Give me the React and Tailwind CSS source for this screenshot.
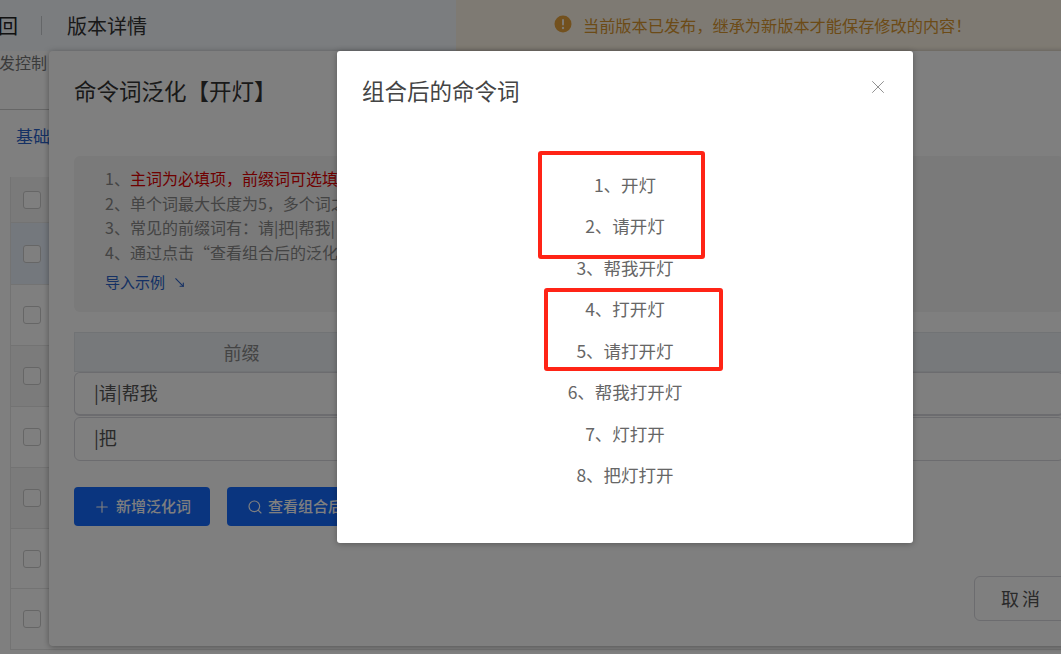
import { MoveDownRight, Plus, Search, X } from 'lucide-react';

const fontStack = 'font-["Noto_Sans_CJK_SC","Noto_Sans",sans-serif]';

const tableRows = [
  { height: 'h-[46px]', bg: 'bg-[#f4f4f4]' },
  { height: 'h-[62px]', bg: 'bg-[#e8f0fb]' },
  { height: 'h-[61px]', bg: 'bg-white' },
  { height: 'h-[61px]', bg: 'bg-[#f7f7f7]' },
  { height: 'h-[61px]', bg: 'bg-white' },
  { height: 'h-[61px]', bg: 'bg-[#f7f7f7]' },
  { height: 'h-[60px]', bg: 'bg-white' },
  { height: 'h-[61px]', bg: 'bg-white' },
];

const commands = ['1、开灯', '2、请开灯', '3、帮我开灯', '4、打开灯', '5、请打开灯', '6、帮我打开灯', '7、灯打开', '8、把灯打开'];

function PageBehind() {
  return (
    <div className="flex flex-col h-full">
      {/* header bar */}
      <div className="flex h-[51px] shrink-0 bg-[#f6fafe]">
        <div className="flex items-center w-[456px] shrink-0">
          <span className="w-[18px] overflow-hidden text-[20px] text-[#222] flex justify-end">回</span>
          <span className="ml-[23px] w-px h-[19px] bg-[#c8ccd0]"></span>
          <span className="ml-[25px] text-[20px] text-[#333]">版本详情</span>
        </div>
        <div className="flex-1 flex items-center pl-[98px] gap-[11px] bg-[#fdf5e6]">
          <svg width="18" height="18" viewBox="0 0 18 18" className="shrink-0 -mt-[3px]">
            <circle cx="9" cy="9" r="8.5" fill="#e6a23c" />
            <rect x="8" y="4" width="2" height="6.5" rx="1" fill="#fdf5e6" />
            <circle cx="9" cy="13" r="1.2" fill="#fdf5e6" />
          </svg>
          <span className="text-[16.2px] text-[#d9962f] whitespace-nowrap">当前版本已发布，继承为新版本才能保存修改的内容！</span>
        </div>
      </div>

      {/* tabs */}
      <div className="h-[59px] shrink-0 border-b border-[#ccc] bg-white">
        <div className="-ml-[17px] text-[16px] leading-[22px] text-[#777]">开发控制</div>
      </div>
      <div className="h-[67px] shrink-0 pl-[16px] pt-[12px] bg-white text-[17px] leading-[28px] text-[#2a62c8]">基础信息</div>

      {/* table */}
      <div className="flex-1 pl-[10px] bg-white">
        <div className="border-l border-[#e6e6e6]">
          {tableRows.map((row, i) => (
            <div key={i} className={`${row.height} ${row.bg} flex items-center pl-[12px] border-b border-[#e6e6e6]`}>
              <span className="w-[18px] h-[18px] bg-white rounded-[3px] border border-[#ccc]"></span>
            </div>
          ))}
        </div>
      </div>
    </div>
  );
}

function GeneralizeDialog() {
  return (
    <div className="absolute left-[49px] top-[51px] w-[1040px] h-[595px] bg-white rounded-[4px] shadow-[0_1px_6px_rgba(0,0,0,0.35)] px-[25px]">
      <h2 className="pt-[24px] text-[22.5px] leading-[30px] text-[#333]">命令词泛化【开灯】</h2>

      <div className="mt-[51px] h-[156px] bg-[#f4f4f4] rounded-[6px] pl-[31px] pt-[10px] text-[16px] leading-[24.5px] text-[#888]">
        <p>1、<span className="text-[#e00000]">主词为必填项，前缀词可选填</span></p>
        <p>2、单个词最大长度为5，多个词之间用|分隔</p>
        <p>3、常见的前缀词有：请|把|帮我|</p>
        <p>4、通过点击“查看组合后的泛化词”</p>
        <div className="flex items-center gap-[8px] mt-[7px] text-[15px] leading-[22px] text-[#2a62c8]">
          导入示例
          <MoveDownRight size={13} />
        </div>
      </div>

      <div className="mt-[20px] flex flex-col">
        <div className="h-[40px] flex items-center bg-[#eef2f6] border border-[#e2e6ea] text-[18px] text-[#888]">
          <span className="w-[333px] text-center">前缀</span>
        </div>
        <div className="h-[44px] flex items-center pl-[19px] pb-[2px] rounded-[6px] border border-[#d8d8de] border-b-[2px] text-[18px] text-[#555]">|请|帮我</div>
        <div className="mt-[1px] h-[44px] flex items-center pl-[19px] pb-[3px] rounded-[6px] border border-[#d8d8de] text-[18px] text-[#555]">|把</div>
      </div>

      <div className="mt-[26px] flex gap-[17px]">
        <button className="w-[136px] h-[39px] flex items-center justify-center gap-[5px] rounded-[4px] bg-[#146aff] text-white text-[15px] font-medium">
          <Plus size={18} strokeWidth={1.5} />
          新增泛化词
        </button>
        <button className="w-[180px] h-[39px] flex items-center justify-start pl-[20px] gap-[5px] rounded-[4px] bg-[#146aff] text-white text-[15px] font-medium whitespace-nowrap">
          <Search size={16} strokeWidth={1.75} />
          查看组合后的泛化词
        </button>
      </div>

      <div className="mt-[50px] ml-[900px]">
        <button className="w-[110px] h-[45px] pr-[14px] rounded-[6px] border border-[#d8d8de] text-[18px] tracking-[3px] text-[#555]">取消</button>
      </div>
    </div>
  );
}

function CombinedDialog() {
  return (
    <div className="absolute left-[337px] top-[51px] w-[576px] h-[492px] bg-white rounded-[3px] shadow-[0_1px_6px_rgba(0,0,0,0.3)]">
      <div className="flex items-start justify-between pl-[25px] pr-[24px] pt-[23px]">
        <h3 className="text-[22.5px] leading-[32px] text-[#444]">组合后的命令词</h3>
        <X size={22} strokeWidth={1} className="text-[#888] mt-[2px]" />
      </div>
      <ul className="mt-[58px] flex flex-col items-center">
        {commands.map((cmd) => (
          <li key={cmd} className="h-[41.5px] flex items-center text-[17.5px] text-[#666]">{cmd}</li>
        ))}
      </ul>

      {/* red annotation boxes */}
      <div className="absolute left-[201px] top-[100px] w-[167px] h-[108px] border-[4px] border-[#ff2416] rounded-[3px]"></div>
      <div className="absolute left-[207px] top-[237px] w-[179px] h-[83px] border-[4px] border-[#ff2416] rounded-[3px]"></div>
    </div>
  );
}

export default function App() {
  return (
    <div className={`relative w-[1061px] h-[654px] overflow-hidden bg-white ${fontStack}`}>
      <PageBehind />
      <GeneralizeDialog />
      <div className="absolute inset-0 bg-black/50"></div>
      <CombinedDialog />
    </div>
  );
}
